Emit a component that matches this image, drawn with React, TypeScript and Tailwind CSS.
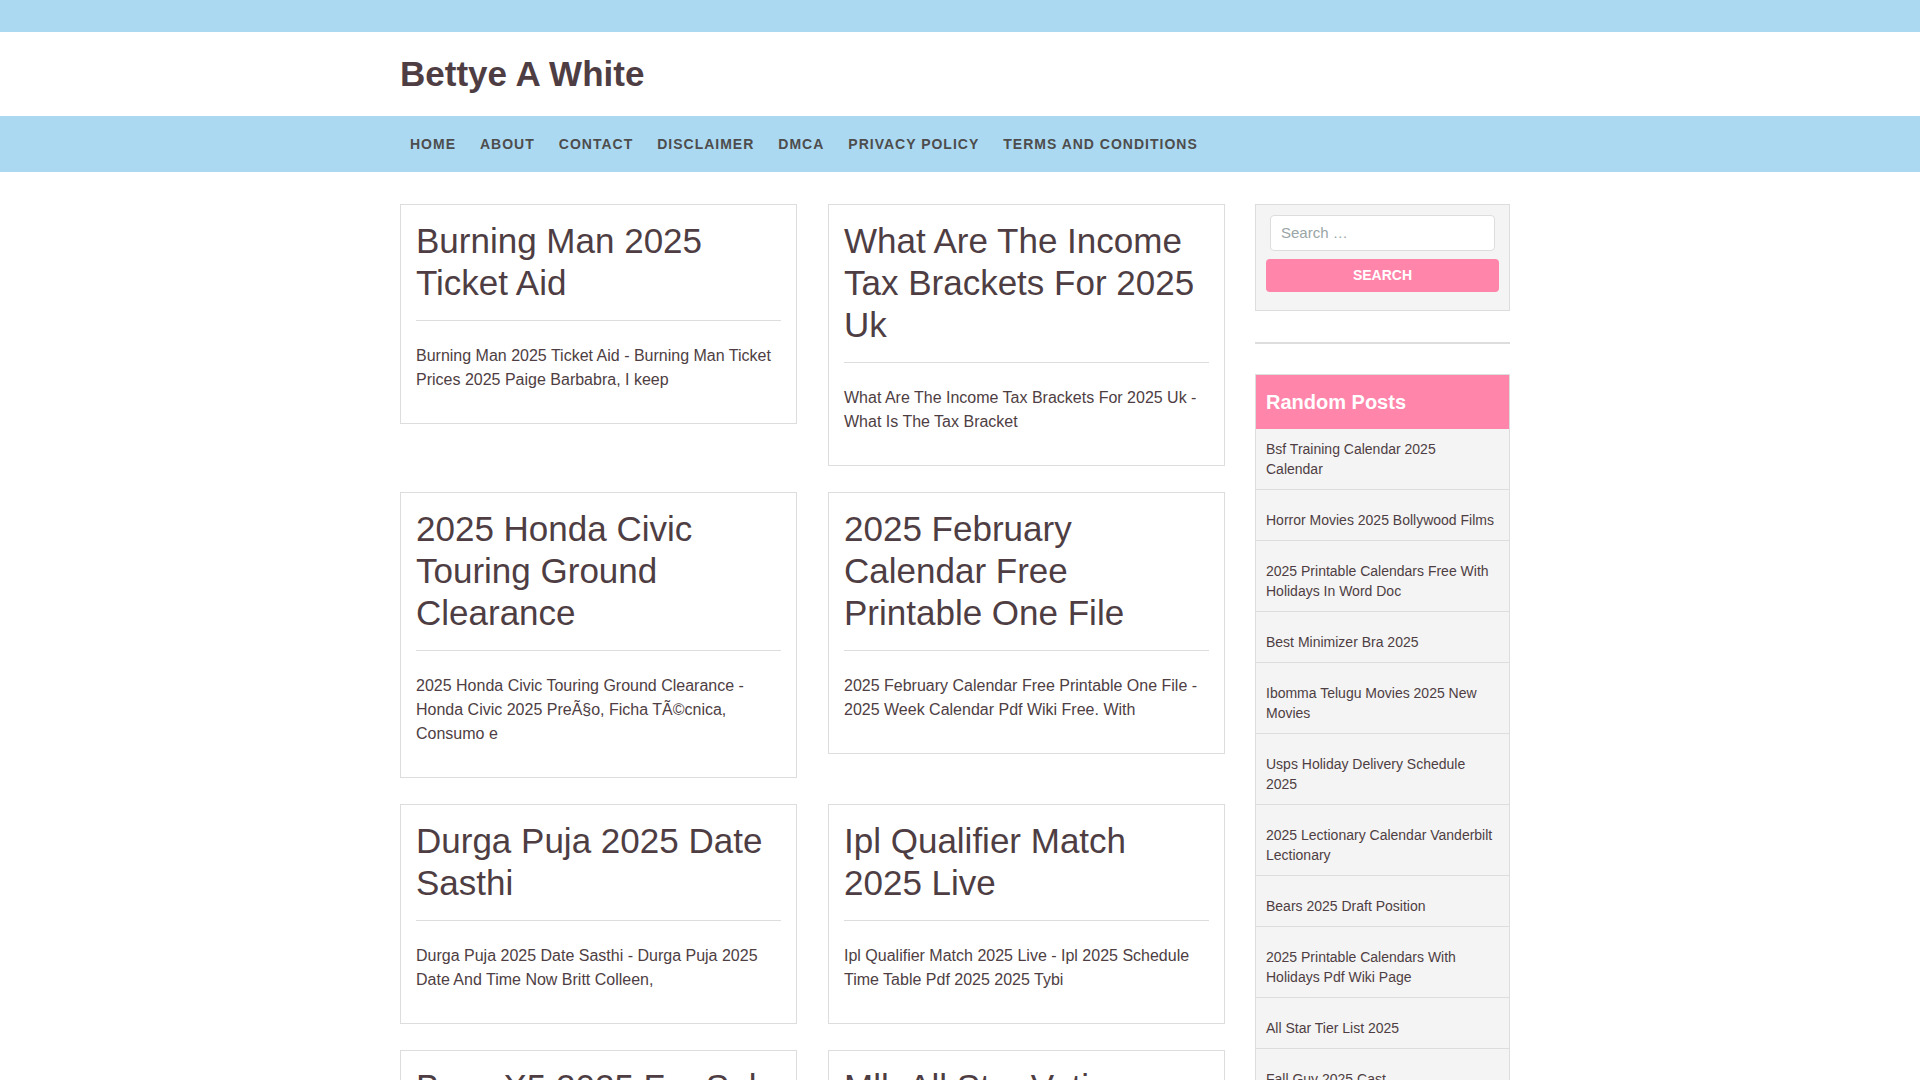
import React from "react";

const navItems = ["Home", "About", "Contact", "Disclaimer", "DMCA", "Privacy Policy", "Terms and Conditions"];

const posts = [
  {
    title: "Burning Man 2025 Ticket Aid",
    excerpt: "Burning Man 2025 Ticket Aid - Burning Man Ticket Prices 2025 Paige Barbabra, I keep",
  },
  {
    title: "What Are The Income Tax Brackets For 2025 Uk",
    excerpt: "What Are The Income Tax Brackets For 2025 Uk - What Is The Tax Bracket",
  },
  {
    title: "2025 Honda Civic Touring Ground Clearance",
    excerpt: "2025 Honda Civic Touring Ground Clearance - Honda Civic 2025 PreÃ§o, Ficha TÃ©cnica, Consumo e",
  },
  {
    title: "2025 February Calendar Free Printable One File",
    excerpt: "2025 February Calendar Free Printable One File - 2025 Week Calendar Pdf Wiki Free. With",
  },
  {
    title: "Durga Puja 2025 Date Sasthi",
    excerpt: "Durga Puja 2025 Date Sasthi - Durga Puja 2025 Date And Time Now Britt Colleen,",
  },
  {
    title: "Ipl Qualifier Match 2025 Live",
    excerpt: "Ipl Qualifier Match 2025 Live - Ipl 2025 Schedule Time Table Pdf 2025 2025 Tybi",
  },
  {
    title: "Bmw X5 2025 For Sale",
    excerpt: "Bmw X5 2025 For Sale - 2025 Bmw X5 For Sale Near Me, The New Bmw X5",
  },
  {
    title: "Mlb All Star Voting 2025",
    excerpt: "Mlb All Star Voting 2025 - Mlb All Star Game 2025 Voting Results",
  },
];

const randomPosts = [
  "Bsf Training Calendar 2025 Calendar",
  "Horror Movies 2025 Bollywood Films",
  "2025 Printable Calendars Free With Holidays In Word Doc",
  "Best Minimizer Bra 2025",
  "Ibomma Telugu Movies 2025 New Movies",
  "Usps Holiday Delivery Schedule 2025",
  "2025 Lectionary Calendar Vanderbilt Lectionary",
  "Bears 2025 Draft Position",
  "2025 Printable Calendars With Holidays Pdf Wiki Page",
  "All Star Tier List 2025",
  "Fall Guy 2025 Cast",
  "2025 Calendar Printable Free Pdf",
  "Nfl Draft 2025 Mock",
];

function PostCard({ title, excerpt }: { title: string; excerpt: string }) {
  return (
    <article className="border border-[#dddddd] bg-white p-[15px]">
      <h2 className="text-[35px] leading-[42px] font-normal text-[#4e3e43]">{title}</h2>
      <div className="mt-[16px] h-px bg-[#dddddd]" />
      <p className="mt-[23px] mb-[16px] text-[16px] leading-[24px] text-[#4e3e43]">{excerpt}</p>
    </article>
  );
}

export default function App() {
  return (
    <div className="min-h-screen bg-white font-['Liberation_Sans',Arial,sans-serif] text-[#4e3e43]">
      <div className="h-[32px] bg-[#acd9f2]" />
      <header className="bg-white pr-[10px]">
        <div className="mx-auto w-[1110px] py-[21px]">
          <h1 className="text-[35px] leading-[42px] font-bold text-[#4e3e43]">Bettye A White</h1>
        </div>
      </header>
      <nav className="bg-[#acd9f2] pr-[10px]">
        <ul className="mx-auto flex h-[56px] w-[1110px] items-center gap-[24px] pl-[10px]">
          {navItems.map((item) => (
            <li
              key={item}
              className="text-[14px] leading-[20px] font-bold uppercase tracking-[1px] text-[#4d4d4d]"
            >
              {item}
            </li>
          ))}
        </ul>
      </nav>

      <div className="pr-[10px]">
        <main className="mx-auto mt-[32px] flex w-[1110px] items-start gap-[30px] pb-[40px]">
          <div className="grid w-[825px] grid-cols-2 items-start gap-x-[31px] gap-y-[26px]">
            {posts.map((p) => (
              <PostCard key={p.title} title={p.title} excerpt={p.excerpt} />
            ))}
          </div>

          <aside className="w-[255px] shrink-0">
            <div className="border border-[#dddddd] bg-[#f4f4f4] px-[10px] pt-[10px] pb-[18px]">
              <div className="mx-[4px] flex h-[36px] items-center rounded-[4px] border border-[#dddddd] bg-white px-[10px]">
                <input
                  className="w-full bg-transparent text-[15px] text-[#4e3e43] outline-none placeholder:text-[#9aa5a6]"
                  placeholder="Search …"
                />
              </div>
              <button className="mt-[8px] flex h-[33px] w-full items-center justify-center rounded-[4px] bg-[#ff85ab] text-[14px] font-bold uppercase text-white">
                Search
              </button>
            </div>

            <div className="mt-[31px] h-[2px] bg-[#dddddd]" />

            <div className="mt-[30px] border border-[#dddddd] bg-[#f4f4f4]">
              <div className="flex h-[54px] items-center bg-[#ff85ab] px-[10px]">
                <h3 className="text-[20px] leading-[24px] font-bold text-white">Random Posts</h3>
              </div>
              <ul>
                {randomPosts.map((t, i) => (
                  <li
                    key={t}
                    className={
                      (i === 0 ? "pt-[10px] " : "pt-[20px] ") +
                      "border-b border-[#dddddd] pl-[10px] pr-[13px] pb-[10px] text-[14px] leading-[20px] text-[#4e3e43]"
                    }
                  >
                    {t}
                  </li>
                ))}
              </ul>
            </div>
          </aside>
        </main>
      </div>
    </div>
  );
}
